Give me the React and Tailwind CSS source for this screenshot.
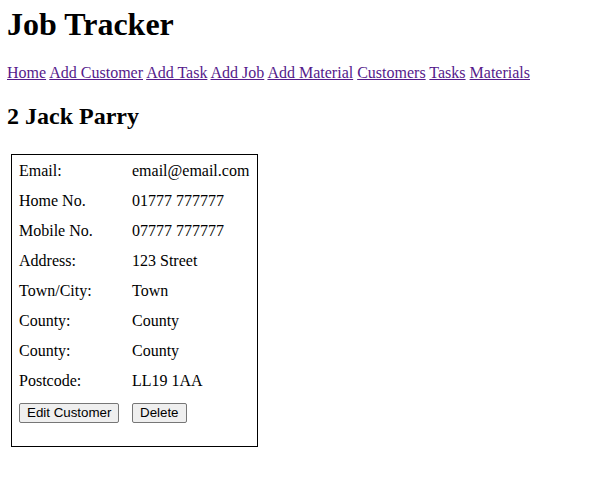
const rows = [
  ["Email:", "email@email.com"],
  ["Home No.", "01777 777777"],
  ["Mobile No.", "07777 777777"],
  ["Address:", "123 Street"],
  ["Town/City:", "Town"],
  ["County:", "County"],
  ["County:", "County"],
  ["Postcode:", "LL19 1AA"],
];

const links = ["Home", "Add Customer", "Add Task", "Add Job", "Add Material", "Customers", "Tasks", "Materials"];

export default function App() {
  return (
    <div className="px-[7px] pt-[6px] text-black bg-white min-h-[480px]" style={{ fontFamily: '"Liberation Serif", "Times New Roman", serif' }}>
      <h1 className="text-[32px] font-bold leading-[37px]">Job Tracker</h1>

      {/* Nav */}
      <nav className="mt-[21px] text-[16px] leading-[18px]">
        {links.map((l, i) => (
          <span key={l}>
            <a href="#" className="underline text-[#551a8b]">{l}</a>
            {i < links.length - 1 ? " " : ""}
          </span>
        ))}
      </nav>

      <h2 className="mt-[20px] text-[24px] font-bold leading-[28px]">2 Jack Parry</h2>

      {/* Customer card */}
      <div className="mt-[24px] ml-[4px] w-[247px] h-[293px] border border-black pt-[1px] pl-[7px]">
        {rows.map(([k, v], i) => (
          <div key={i} className="flex items-center h-[30px] text-[16px] leading-[18px]">
            <div className="w-[113px]">{k}</div>
            <div>{v}</div>
          </div>
        ))}
        <div className="flex items-start mt-[7px]" style={{ fontFamily: '"Liberation Sans", Arial, sans-serif' }}>
          <div className="w-[113px] flex">
            <button className="block h-[20px] px-[7px] text-[13.333px] leading-[16px] bg-[#efefef] border border-[#767676] rounded-[2px]">Edit Customer</button>
          </div>
          <button className="block h-[20px] px-[7px] text-[13.333px] leading-[16px] bg-[#efefef] border border-[#767676] rounded-[2px]">Delete</button>
        </div>
      </div>
    </div>
  );
}
